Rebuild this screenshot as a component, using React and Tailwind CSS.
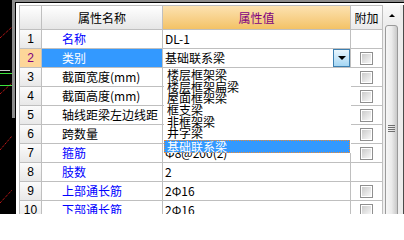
import React from 'react'

const rows = [
  { n: 1, name: '名称', blue: true, value: 'DL-1' },
  { n: 2, name: '类别', blue: true, value: '基础联系梁', check: true, selected: true, combo: true },
  { n: 3, name: '截面宽度(mm)', value: '', check: true },
  { n: 4, name: '截面高度(mm)', value: '', check: true },
  { n: 5, name: '轴线距梁左边线距', value: '', check: true },
  { n: 6, name: '跨数量', value: '', check: true },
  { n: 7, name: '箍筋', blue: true, value: 'Φ8@200(2)', check: true },
  { n: 8, name: '肢数', blue: true, value: '2' },
  { n: 9, name: '上部通长筋', blue: true, value: '2Φ16', check: true },
  { n: 10, name: '下部通长筋', blue: true, value: '2Φ16', check: true },
]

const options = ['楼层框架梁', '楼层框架扁梁', '屋面框架梁', '框支梁', '非框架梁', '井字梁']

function CheckBox() {
  return (
    <div className="h-[13px] w-[13px] border border-[#8f8f8f] bg-white p-px">
      <div className="h-full w-full bg-linear-to-br from-[#cbcbcb] to-[#f8f8f8]" />
    </div>
  )
}

function CadCanvas() {
  // cad drawing behind the property panel
  return (
    <svg width="12" height="214" className="shrink-0 bg-black">
      <line x1="0" y1="38" x2="12" y2="27" stroke="#ff2020" strokeWidth="1" strokeDasharray="1 1" />
      <line x1="0" y1="94" x2="12" y2="83" stroke="#ff2020" strokeWidth="1" strokeDasharray="1 1" />
      <line x1="0" y1="150" x2="12" y2="136" stroke="#ff2020" strokeWidth="1" strokeDasharray="1 1" />
      <line x1="0" y1="203" x2="12" y2="190" stroke="#ff2020" strokeWidth="1" strokeDasharray="1 1" />
      <line x1="0" y1="70.5" x2="10" y2="70.5" stroke="#c8c8c8" strokeWidth="1" />
      <line x1="0" y1="73.5" x2="12" y2="73.5" stroke="#3ce23c" strokeWidth="1" />
      <line x1="0" y1="85.5" x2="12" y2="85.5" stroke="#3ce23c" strokeWidth="1" />
    </svg>
  )
}

function Row({ row }) {
  return (
    <div className="flex h-[19px] border-b border-[#bfbfbf]">
      <div
        className={
          row.selected
            ? 'flex w-[22px] items-center justify-center border-r border-[#bfbfbf] bg-[#fdd699] text-[#800080]'
            : 'flex w-[22px] items-center justify-center border-r border-[#bfbfbf] bg-linear-to-b from-[#fbfbfb] to-[#e8e8e8]'
        }
      >
        <span className="font-['Liberation_Sans',sans-serif] text-[12px]">{row.n}</span>
      </div>
      <div
        className={
          row.selected
            ? 'flex w-[121px] items-center border-r border-[#bfbfbf] bg-[#3399ff] pl-[20px] text-white'
            : row.blue
              ? 'flex w-[121px] items-center border-r border-[#bfbfbf] pl-[20px] text-[#0000ff]'
              : 'flex w-[121px] items-center border-r border-[#bfbfbf] pl-[20px]'
        }
      >
        <span className="whitespace-nowrap">{row.name}</span>
      </div>
      <div className="flex w-[188px] items-center border-r border-[#bfbfbf] bg-white pl-[2px]">
        <span className="flex-1 whitespace-nowrap">{row.value}</span>
        {row.combo && (
          <div className="flex h-full w-[17px] items-center justify-center border border-[#3c7fb1] bg-linear-to-b from-[#eaf6fd] to-[#a4d6f3]">
            <div className="h-0 w-0 border-x-[4px] border-t-[4px] border-x-transparent border-t-black" />
          </div>
        )}
      </div>
      <div className="flex w-[32px] items-center justify-center border-r border-[#bfbfbf] bg-white">
        {row.check && <CheckBox />}
      </div>
    </div>
  )
}

export default function App() {
  return (
    <div className="flex h-[214px] w-[404px] overflow-hidden bg-black font-['Noto_Sans_CJK_SC',sans-serif] text-[12px] text-black">
      <CadCanvas />
      <div className="flex w-[3px] shrink-0 flex-col">
        <div className="h-[118px] bg-[#8c8c8c]" />
      </div>
      <div className="flex flex-1 flex-col bg-[#8c8c8c] pt-[2px]">
        <div className="flex flex-1 border-l border-t border-black">
          <div className="flex flex-1 border-l-[3px] border-t-2 border-white">
            {/* property grid */}
            <div className="relative w-[364px] shrink-0 border-l border-t border-[#bfbfbf] bg-white">
              <div className="flex h-[24px] border-b border-[#bfbfbf]">
                <div className="w-[22px] border-r border-[#bfbfbf] bg-linear-to-b from-white to-[#e6e6e6]" />
                <div className="flex w-[121px] items-center justify-center border-r border-[#bfbfbf] bg-linear-to-b from-white to-[#e6e6e6]">
                  属性名称
                </div>
                <div className="flex w-[188px] items-center justify-center border-r border-[#bfbfbf] bg-linear-to-b from-[#fce2b0] to-[#f3c265] text-[#800080]">
                  属性值
                </div>
                <div className="flex w-[32px] items-center justify-center border-r border-[#bfbfbf] bg-linear-to-b from-white to-[#eaeaea]">
                  附加
                </div>
              </div>
              {rows.map((row) => (
                <Row key={row.n} row={row} />
              ))}

              {/* open dropdown of 类别 */}
              <div className="absolute left-[144px] top-[62px] h-[85px] w-[187px] bg-white pt-px">
                {options.map((o) => (
                  <div key={o} className="h-[11.7px] whitespace-nowrap pl-[3px] leading-[11.7px]">
                    {o}
                  </div>
                ))}
                <div className="mt-px flex h-[13px] w-[186px] items-center border border-dotted border-[#f08a30] bg-[#3399ff] pl-[2px] leading-[11px] text-white">
                  基础联系梁
                </div>
              </div>
            </div>

            {/* scrollbar */}
            <div className="flex w-[17px] shrink-0 flex-col bg-[#efefef]">
              <div className="flex h-[20px] items-center justify-center bg-linear-to-b from-[#fafafa] to-[#ececec]">
                <div className="h-0 w-0 border-x-[3px] border-b-[3px] border-x-transparent border-b-black" />
              </div>
              <div className="mx-[2px] flex flex-1 flex-col items-center rounded-t-[3px] border border-[#9a9a9a] bg-linear-to-r from-[#f6f6f6] via-[#ececec] to-[#c9c9c9] pt-[99px]">
                <div className="flex w-[7px] flex-col gap-px">
                  <div className="h-px bg-[#6f6f6f]" />
                  <div className="h-px bg-[#6f6f6f]" />
                  <div className="h-px bg-[#6f6f6f]" />
                  <div className="h-px bg-[#6f6f6f]" />
                </div>
              </div>
            </div>
            <div className="w-[3px] shrink-0 bg-[#ececec]" />
            <div className="w-px shrink-0 bg-[#4a4a4a]" />
          </div>
        </div>
      </div>
    </div>
  )
}
